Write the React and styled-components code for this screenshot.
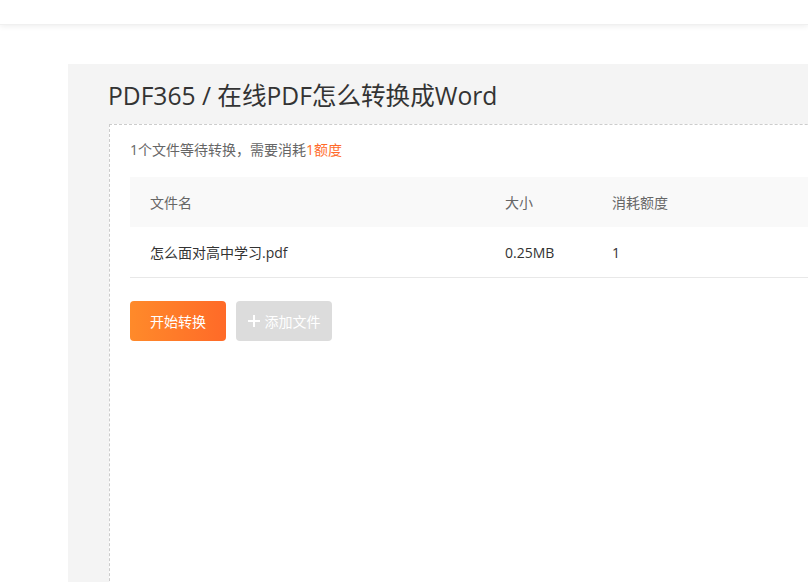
import React from "react";
import styled, { createGlobalStyle } from "styled-components";

const Global = createGlobalStyle`
  html, body {
    margin: 0;
    padding: 0;
    background: #fff;
    overflow: hidden;
    font-family: "Open Sans", "Noto Sans CJK SC", sans-serif;
  }
`;

const Header = styled.header`
  height: 24px;
  background: #fff;
  box-shadow: 0 1px 6px rgba(0, 0, 0, 0.08);
  border-bottom: 1px solid #f0f0f0;
  position: relative;
`;

const Panel = styled.main`
  margin: 39px 0 0 68px;
  width: 1100px;
  height: 518px;
  overflow: hidden;
  background: #f4f4f4;
  padding: 14px 0 0 40px;
  box-sizing: border-box;
`;

const Title = styled.h1`
  margin: 0 0 10px;
  font-size: 24.6px;
  font-weight: 400;
  line-height: 36px;
  color: #333;
  font-family: "Open Sans", "Noto Sans CJK SC", sans-serif;
`;

const Box = styled.section`
  margin-left: 1px;
  background: #fff;
  border: 1px dashed #ccc;
  min-height: 500px;
  padding: 15px 20px 0;
`;

const Hint = styled.p`
  margin: 0 0 17px;
  font-size: 14px;
  line-height: 20px;
  color: #666;
`;

const Accent = styled.span`
  color: #ff6a2a;
`;

const Row = styled.div`
  display: grid;
  grid-template-columns: 355px 107px 1fr;
  align-items: center;
  height: 50px;
  padding-left: 20px;
  font-size: 14px;
  color: ${(p) => (p.$head ? "#666" : "#333")};
  background: ${(p) => (p.$head ? "#f9f9f9" : "#fff")};
  border-bottom: ${(p) => (p.$head ? "none" : "1px solid #e8e8e8")};
`;

const Actions = styled.div`
  display: flex;
  gap: 10px;
  margin-top: 23px;
`;

const Button = styled.button`
  width: 96px;
  height: 40px;
  border: none;
  border-radius: 4px;
  color: #fff;
  font-size: 14px;
  font-family: inherit;
  display: flex;
  align-items: center;
  justify-content: center;
  gap: 5px;
  padding: 0;
  background: ${(p) =>
    p.$primary ? "linear-gradient(90deg, #ff8a2a, #ff6a28)" : "#dcdcdc"};
`;

const files = [{ name: "怎么面对高中学习.pdf", size: "0.25MB", cost: "1" }];

export default function App() {
  return (
    <>
      <Global />
      <Header />
      <Panel>
        <Title>PDF365 / 在线PDF怎么转换成Word</Title>
        <Box>
          <Hint>
            1个文件等待转换，需要消耗<Accent>1额度</Accent>
          </Hint>
          <Row $head>
            <span>文件名</span>
            <span>大小</span>
            <span>消耗额度</span>
          </Row>
          {files.map((f) => (
            <Row key={f.name}>
              <span>{f.name}</span>
              <span>{f.size}</span>
              <span>{f.cost}</span>
            </Row>
          ))}
          <Actions>
            <Button $primary>开始转换</Button>
            <Button>
              <svg width="12" height="12" viewBox="0 0 12 12">
                <path d="M6 0v12M0 6h12" stroke="#fff" strokeWidth="2" />
              </svg>
              添加文件
            </Button>
          </Actions>
        </Box>
      </Panel>
    </>
  );
}
